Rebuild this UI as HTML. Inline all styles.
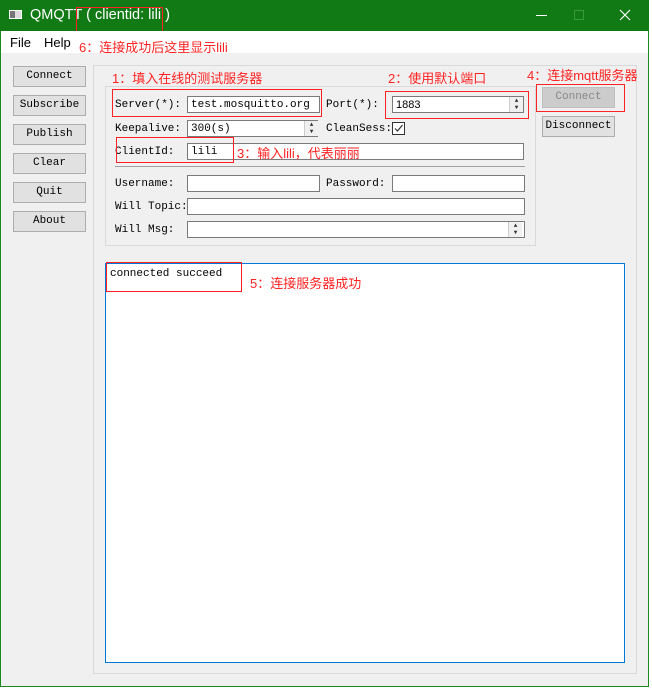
<!DOCTYPE html>
<html><head><meta charset="utf-8"><style>
*{margin:0;padding:0;box-sizing:border-box}
body{width:652px;height:689px;background:#fff;position:relative;overflow:hidden;font-family:"Liberation Mono","Noto Sans CJK SC",monospace;font-size:11px;color:#000}
.a{position:absolute}
.win{left:0;top:0;width:649px;height:687px;border:1px solid #1a8a1a;background:#f0f0f0}
.tb{left:0;top:0;width:649px;height:31px;background:#117a14}
.mb{left:1px;top:31px;width:647px;height:22px;background:#fff}
.cn{font-family:"Liberation Sans","Noto Sans CJK SC",sans-serif;color:#f22;font-size:13px;white-space:nowrap}
.btn{background:#e1e1e1;border:1px solid #adadad;text-align:center;line-height:19px;font-size:11px}
.in{background:#fff;border:1px solid #7a7a7a;height:17px;line-height:16px;padding-left:3px}
.rb{border:1px solid #f22}
.lb{white-space:nowrap}
.sp{background:#f0f0f0;border-left:1px solid #ccc;width:14px;height:15px;font-size:6px;line-height:7px;text-align:center;color:#333}
</style></head><body>
<div class="a win"></div>
<div class="a tb"></div>
<div class="a" style="left:9px;top:10px;width:13px;height:9px;background:#ddd;border:1px solid #fff"><div style="width:5px;height:7px;background:#777"></div></div>
<div class="a" style="left:30px;top:7px;color:#fff;font-family:'Liberation Sans',sans-serif;font-size:14.5px">QMQTT ( clientid: lili )</div>
<div class="a rb" style="left:76px;top:7px;width:87px;height:25px"></div>
<div class="a" style="left:536px;top:15px;width:11px;height:1px;background:#fff"></div>
<div class="a" style="left:574px;top:10px;width:10px;height:10px;border:1px solid #3a9a3a"></div>
<svg class="a" style="left:619px;top:9px" width="12" height="12"><path d="M1 1L11 11M11 1L1 11" stroke="#fff" stroke-width="1.2"/></svg>
<div class="a mb"></div>
<div class="a" style="left:10px;top:35px;font-family:'Liberation Sans',sans-serif;font-size:13px">File</div>
<div class="a" style="left:44px;top:35px;font-family:'Liberation Sans',sans-serif;font-size:13px">Help</div>
<div class="a cn" style="left:79px;top:37px">6：连接成功后这里显示lili</div>

<div class="a btn" style="left:13px;top:66px;width:73px;height:21px">Connect</div>
<div class="a btn" style="left:13px;top:95px;width:73px;height:21px">Subscribe</div>
<div class="a btn" style="left:13px;top:124px;width:73px;height:21px">Publish</div>
<div class="a btn" style="left:13px;top:153px;width:73px;height:21px">Clear</div>
<div class="a btn" style="left:13px;top:182px;width:73px;height:21px">Quit</div>
<div class="a btn" style="left:13px;top:211px;width:73px;height:21px">About</div>

<div class="a" style="left:93px;top:65px;width:544px;height:609px;border:1px solid #d9d9d9"></div>
<div class="a" style="left:105px;top:86px;width:431px;height:160px;border:1px solid #d9d9d9"></div>
<div class="a cn" style="left:112px;top:68px">1：填入在线的测试服务器</div>
<div class="a cn" style="left:388px;top:68px">2：使用默认端口</div>
<div class="a cn" style="left:527px;top:65px">4：连接mqtt服务器</div>

<div class="a lb" style="left:115px;top:99px">Server(*):</div>
<div class="a in" style="left:187px;top:96px;width:133px">test.mosquitto.org</div>
<div class="a rb" style="left:112px;top:89px;width:210px;height:28px"></div>
<div class="a lb" style="left:326px;top:99px">Port(*):</div>
<div class="a in" style="left:392px;top:96px;width:132px;font-family:'Liberation Sans',sans-serif">1883</div>
<div class="a sp" style="left:509px;top:97px">▲<br>▼</div>
<div class="a rb" style="left:385px;top:91px;width:144px;height:28px"></div>

<div class="a lb" style="left:115px;top:123px">Keepalive:</div>
<div class="a in" style="left:187px;top:120px;width:131px">300(s)</div>
<div class="a sp" style="left:304px;top:121px">▲<br>▼</div>
<div class="a lb" style="left:326px;top:123px">CleanSess:</div>
<div class="a" style="left:392px;top:122px;width:13px;height:13px;border:1px solid #333;background:#fff"><svg width="11" height="11" style="display:block"><path d="M2 5.5L4.5 8L9.5 2" stroke="#333" fill="none" stroke-width="1.2"/></svg></div>

<div class="a lb" style="left:115px;top:146px">ClientId:</div>
<div class="a in" style="left:187px;top:143px;width:337px">lili</div>
<div class="a rb" style="left:116px;top:137px;width:118px;height:26px"></div>
<div class="a cn" style="left:237px;top:143px">3：输入lili，代表丽丽</div>
<div class="a" style="left:115px;top:166px;width:410px;height:1px;background:#a0a0a0"></div>

<div class="a lb" style="left:115px;top:178px">Username:</div>
<div class="a in" style="left:187px;top:175px;width:133px"></div>
<div class="a lb" style="left:326px;top:178px">Password:</div>
<div class="a in" style="left:392px;top:175px;width:133px"></div>
<div class="a lb" style="left:115px;top:201px">Will Topic:</div>
<div class="a in" style="left:187px;top:198px;width:338px"></div>
<div class="a lb" style="left:115px;top:224px">Will Msg:</div>
<div class="a in" style="left:187px;top:221px;width:338px"></div>
<div class="a sp" style="left:508px;top:222px;height:15px">▲<br>▼</div>

<div class="a btn" style="left:542px;top:87px;width:73px;height:21px;color:#888;background:#ccc;border-color:#bfbfbf">Connect</div>
<div class="a rb" style="left:536px;top:84px;width:89px;height:28px"></div>
<div class="a btn" style="left:542px;top:116px;width:73px;height:21px">Disconnect</div>

<div class="a" style="left:105px;top:263px;width:520px;height:400px;background:#fff;border:1px solid #0078d7"></div>
<div class="a lb" style="left:110px;top:268px">connected succeed</div>
<div class="a rb" style="left:106px;top:262px;width:136px;height:30px"></div>
<div class="a cn" style="left:250px;top:273px">5：连接服务器成功</div>
</body></html>
